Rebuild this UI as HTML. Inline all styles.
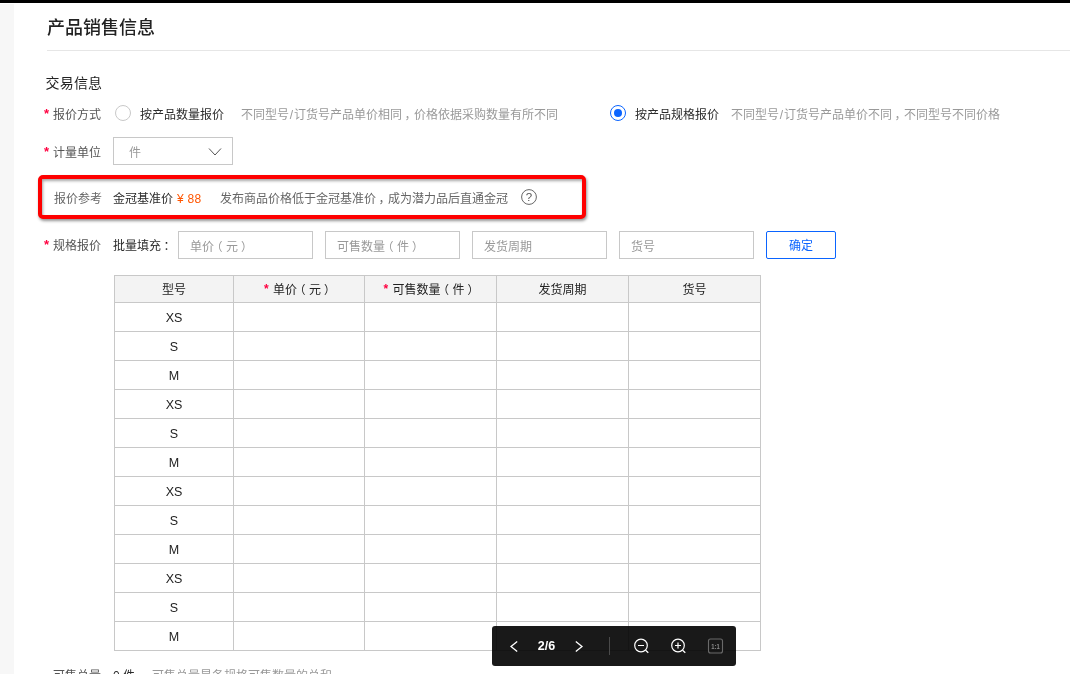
<!DOCTYPE html>
<html lang="zh-CN">
<head>
<meta charset="utf-8">
<title>产品销售信息</title>
<style>
*{box-sizing:border-box;margin:0;padding:0}
html,body{width:1070px;height:674px;overflow:hidden;background:#fff}
body{position:relative;font-family:"Liberation Sans","Noto Sans CJK SC",sans-serif;font-size:12px;color:#333;line-height:1}
#page{position:absolute;left:0;top:0;width:1070px;height:674px;overflow:hidden;will-change:transform}
.topbar{position:absolute;left:0;top:0;width:1070px;height:3px;background:#000}
.leftbar{position:absolute;left:0;top:4px;width:14px;height:670px;background:#f7f7f7}
.abs{position:absolute;white-space:nowrap}
h1{position:absolute;left:47px;top:15px;font-size:18px;line-height:26px;font-weight:500;color:#222;white-space:nowrap}
.hr{position:absolute;left:47px;top:50px;width:1023px;height:1px;background:#e6e6e6}
h2{position:absolute;left:45.5px;letter-spacing:.2px;top:73px;font-size:14px;line-height:20px;font-weight:400;color:#222;white-space:nowrap}
.row{position:absolute;left:0;height:20px;line-height:20px;white-space:nowrap}
.req{color:#ff0040;position:absolute;font-size:13px;font-weight:700;top:-1px;margin-left:0}
.lbl{position:absolute;color:#555}
.sl{font-weight:400;display:inline-block;width:5px;text-align:center}
.cm{font-weight:400;position:relative;left:2.5px}
.pl{font-weight:400;position:relative;left:-3px;top:0;font-size:11.5px;letter-spacing:.5px}
.pr{font-weight:400;position:relative;left:3px;top:0;font-size:11.5px;letter-spacing:.5px}
.hint{position:absolute;color:#999}
.strong{position:absolute;color:#2b2b2b;font-weight:400}
.radio{position:absolute;width:16px;height:16px;border:1px solid #c8c8c8;border-radius:50%;background:#fff}
.radio.on{border-color:#0a64ff}
.radio.on::after{content:"";position:absolute;left:3px;top:3px;width:8px;height:8px;border-radius:50%;background:#0a64ff}
.select{position:absolute;left:113px;top:137px;width:120px;height:28px;border:1px solid #c8c8c8;background:#fff}
.select span{position:absolute;left:15px;top:1px;line-height:28px;color:#999}
.select svg{position:absolute;left:94px;top:9px}
.refbox{position:absolute;left:38px;top:175px;width:548px;height:44px;border:4px solid #fe0000;border-radius:5px;background:#fff;box-shadow:1px 2px 3px rgba(0,0,0,.42),inset 1px 2px 3px rgba(0,0,0,.35)}
input.ipt{position:absolute;top:231px;height:28px;border:1px solid #c8c8c8;background:#fff;font:inherit;font-size:12px;padding:0 11px;color:#333;outline:0;border-radius:0}
.ph{position:absolute;top:237px;line-height:20px;color:#999;white-space:nowrap}
button.ok{position:absolute;left:766px;top:231px;width:70px;height:28px;border:1px solid #0a64ff;border-radius:2px;background:#fff;color:#0a64ff;font:inherit;font-size:12px;padding:2px 0 0}
table{position:absolute;left:114px;top:275px;border-collapse:collapse;table-layout:fixed;width:646px}
td,th{border:1px solid #c8c8c8;height:29px;text-align:center;font-weight:400;font-size:12px;color:#333;padding:2px 0 0}
th{background:#f3f3f3;height:27px;color:#222}
td{font-size:12.5px;color:#222;padding-top:2px}
th i{font-style:normal;color:#ff0040;font-size:12px;font-weight:700;line-height:12px;position:relative;top:-1px;left:-1px}
.tool{position:absolute;left:492px;top:626px;width:244px;height:40px;background:rgba(0,0,0,.9);border-radius:3px}
.tool svg{position:absolute;left:0;top:0}
</style>
</head>
<body>
<div id="page">
<div class="topbar"></div>
<div class="leftbar"></div>
<h1>产品销售信息</h1>
<div class="hr"></div>
<h2>交易信息</h2>

<div class="row" style="top:105px">
  <span class="req" style="left:44px">*</span><span class="lbl" style="left:53px">报价方式</span>
  <span class="radio" style="left:115px;top:0px"></span>
  <span class="strong" style="left:140px">按产品数量报价</span>
  <span class="hint" style="left:241px">不同型号<b class="sl">/</b>订货号产品单价相同<b class="cm">，</b>价格依据采购数量有所不同</span>
  <span class="radio on" style="left:610px;top:0px"></span>
  <span class="strong" style="left:635px">按产品规格报价</span>
  <span class="hint" style="left:731px">不同型号<b class="sl">/</b>订货号产品单价不同<b class="cm">，</b>不同型号不同价格</span>
</div>

<div class="row" style="top:143px">
  <span class="req" style="left:44px">*</span><span class="lbl" style="left:53px">计量单位</span>
</div>
<div class="select"><span>件</span>
  <svg width="14" height="10" viewBox="0 0 14 10"><path d="M1 1.5 L7 8 L13 1.5" fill="none" stroke="#555" stroke-width="1"/></svg>
</div>

<div class="refbox"></div>
<div class="row" style="top:189px">
  <span class="lbl" style="left:54px;color:#666">报价参考</span>
  <span class="strong" style="left:113px">金冠基准价</span>
  <span class="lbl" style="left:177px;color:#ff5500;letter-spacing:.3px">¥ 88</span>
  <span class="lbl" style="left:220px;color:#666">发布商品价格低于金冠基准价<b class="cm">，</b>成为潜力品后直通金冠</span>
  <svg class="abs" style="left:520px;top:-1px" width="18" height="18" viewBox="0 0 18 18"><circle cx="9" cy="9" r="7.4" fill="none" stroke="#666" stroke-width="1"/><text x="9" y="13" font-size="11.5" text-anchor="middle" fill="#555" font-family="Liberation Sans, sans-serif">?</text></svg>
</div>

<div class="row" style="top:236px">
  <span class="req" style="left:44px">*</span><span class="lbl" style="left:53px">规格报价</span>
  <span class="strong" style="left:113px">批量填充<b class="cm">：</b></span>
</div>
<input class="ipt" id="f1" style="left:178px;width:135px"><label class="ph" for="f1" style="left:190px">单价<b class="pl">（</b>元<b class="pr">）</b></label>
<input class="ipt" id="f2" style="left:325px;width:135px"><label class="ph" for="f2" style="left:337px">可售数量<b class="pl">（</b>件<b class="pr">）</b></label>
<input class="ipt" id="f3" style="left:472px;width:135px"><label class="ph" for="f3" style="left:484px">发货周期</label>
<input class="ipt" id="f4" style="left:619px;width:135px"><label class="ph" for="f4" style="left:631px">货号</label>
<button class="ok">确定</button>

<table>
<colgroup><col style="width:119px"><col style="width:131px"><col style="width:132px"><col style="width:132px"><col style="width:132px"></colgroup>
<thead><tr><th>型号</th><th><i>*</i> 单价<b class="pl">（</b>元<b class="pr">）</b></th><th><i>*</i> 可售数量<b class="pl">（</b>件<b class="pr">）</b></th><th>发货周期</th><th>货号</th></tr></thead>
<tbody>
<tr><td>XS</td><td></td><td></td><td></td><td></td></tr>
<tr><td>S</td><td></td><td></td><td></td><td></td></tr>
<tr><td>M</td><td></td><td></td><td></td><td></td></tr>
<tr><td>XS</td><td></td><td></td><td></td><td></td></tr>
<tr><td>S</td><td></td><td></td><td></td><td></td></tr>
<tr><td>M</td><td></td><td></td><td></td><td></td></tr>
<tr><td>XS</td><td></td><td></td><td></td><td></td></tr>
<tr><td>S</td><td></td><td></td><td></td><td></td></tr>
<tr><td>M</td><td></td><td></td><td></td><td></td></tr>
<tr><td>XS</td><td></td><td></td><td></td><td></td></tr>
<tr><td>S</td><td></td><td></td><td></td><td></td></tr>
<tr><td>M</td><td></td><td></td><td></td><td></td></tr>
</tbody>
</table>

<div class="row" style="top:666px">
  <span class="lbl" style="left:53px">可售总量</span>
  <span class="strong" style="left:113px">0 件</span>
  <span class="hint" style="left:152px">可售总量是各规格可售数量的总和</span>
</div>

<div class="tool">
  <svg width="244" height="40" viewBox="0 0 244 40">
    <path d="M25.2 15.4 L19 20.5 L25.2 25.6" fill="none" stroke="#fff" stroke-width="1.3"/>
    <text x="54.5" y="24.2" font-size="12.5" font-weight="700" text-anchor="middle" fill="#fff" font-family="Liberation Sans, sans-serif">2/6</text>
    <path d="M83.8 15.4 L90 20.5 L83.8 25.6" fill="none" stroke="#fff" stroke-width="1.3"/>
    <path d="M117.5 11 V29" stroke="#4a4a4a" stroke-width="1"/>
    <circle cx="149" cy="19.5" r="6.3" fill="none" stroke="#fff" stroke-width="1.2"/>
    <path d="M146 19.5 H152 M153.6 24.2 L156.3 26.8" stroke="#fff" stroke-width="1.2" fill="none"/>
    <circle cx="186" cy="19.5" r="6.3" fill="none" stroke="#fff" stroke-width="1.2"/>
    <path d="M183 19.5 H189 M186 16.5 V22.5 M190.6 24.2 L193.3 26.8" stroke="#fff" stroke-width="1.2" fill="none"/>
    <rect x="216.5" y="13" width="14" height="14" rx="2" fill="none" stroke="#6a6a6a" stroke-width="1.1"/>
    <text x="219.3" y="23" font-size="8" font-weight="700" fill="#8a8a8a" font-family="Liberation Sans, sans-serif" textLength="8.4" lengthAdjust="spacingAndGlyphs">1:1</text>
  </svg>
</div>
</div>
</body>
</html>
